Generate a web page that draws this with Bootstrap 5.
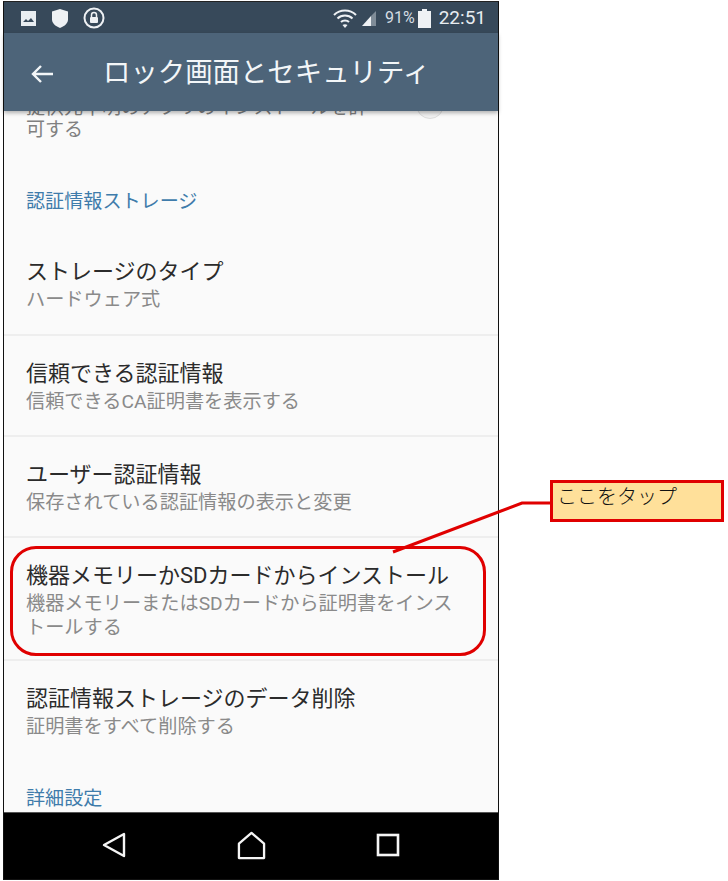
<!DOCTYPE html>
<html lang="ja">
<head>
    <meta charset="UTF-8">
    <meta name="viewport" content="width=device-width, initial-scale=1.0">
    <title>ロック画面とセキュリティ</title>
    <link href="https://cdn.jsdelivr.net/npm/bootstrap@5.3.0/dist/css/bootstrap.min.css" rel="stylesheet">
    <style>
        html, body { height: 881px; overflow: hidden; background: #fff; }
        body { font-family: "Roboto", "Noto Sans CJK JP", sans-serif; position: relative; }
        .shot { padding: 1px 0 0 3px; }
        .phone { width: 496px; height: 879px; border: 1px solid #111; border-top-color: #222; background: #fafafa; position: relative; }
        .status-bar { height: 31px; background: #37495a; color: #e8edf1; padding: 1px 12px 0 16px; font-size: 19px; }
        .status-bar .pct { font-size: 16px; margin: 0 3px 0 8px; color: #d5dde3; }
        .status-left { gap: 14px; }
        .app-bar { height: 78px; background: #4d6479; color: #f3f6f8; padding: 4px 0 0 25px; box-shadow: 0 2px 4px rgba(0,0,0,.3); position: relative; z-index: 2; }
        .app-bar h1 { font-size: 27.4px; font-weight: 400; margin: 0 0 0 44px; line-height: 1; white-space: nowrap; }
        .scroll-area { height: 701px; overflow: hidden; }
        .intro { margin-top: -14px; padding: 0 22px; font-size: 19px; line-height: 22px; color: #808080; height: 60px; position: relative; }
        .intro-toggle { position: absolute; left: 412px; top: -6px; width: 28px; height: 28px; border-radius: 50%; background: #f1f1f1; border: 1px solid #ddd; }
        .sect-title { padding: 0 22px; color: #3f7cab; font-size: 19.1px; line-height: 26px; }
        .sect-first { margin-top: 32px; }
        .sect-last { margin-top: 21px; }
        .set-row { padding: 24px 22px 21px; border-bottom: 2px solid #eeeeee; }
        .row-top { padding-top: 43px; padding-bottom: 22px; }
        .row-wrap { padding-bottom: 19px; padding-right: 36px; }
        .row-end { padding-top: 24px; padding-bottom: 26px; }
        .set-name { color: #2b2b2b; font-size: 22px; line-height: 28px; }
        .set-desc { color: #8a8a8a; font-size: 19.2px; line-height: 24px; margin-top: 2px; }
        .nav-strip { height: 67px; background: #000; border-top: 1px solid #555; padding: 0 98px 2px 97px; }
        .nav-home { margin-left: 110px; }
        .tap-ring { position: absolute; left: 10px; top: 546px; width: 476px; height: 110px; border: 3px solid #e00000; border-radius: 26px; z-index: 3; }
        .tap-note { position: absolute; left: 550px; top: 480px; width: 174px; height: 42px; background: #ffe09a; border: 3px solid #e00000; color: #111; font-size: 20px; line-height: 24px; padding: 1px 4px; font-family: "Noto Sans CJK JP", sans-serif; font-weight: 300; }
        .tap-line { position: absolute; left: 380px; top: 495px; z-index: 4; }
    </style>
</head>
<body>
    <div class="shot">
        <div class="phone d-flex flex-column">
            <div class="status-bar d-flex align-items-center">
                <div class="status-left d-flex align-items-center">
                    <svg width="17" height="17" viewBox="0 0 17 17"><path fill="#e8edf1" d="M1 1h15v15H1z"/><path fill="#37495a" d="M3 12l3-3 2 2 3-3 3 4z"/></svg>
                    <svg width="18" height="21" viewBox="0 0 18 21"><path fill="#eef1f4" d="M9 1l8 2.500v8c0 4-4 7-8 8.500-4-1.500-8-4.500-8-8.500v-8z"/></svg>
                    <svg width="22" height="22" viewBox="0 0 22 22"><circle cx="11" cy="11" r="9.500" fill="none" stroke="#eef1f4" stroke-width="2"/><rect x="7" y="10" width="8" height="6" rx="1" fill="#eef1f4"/><path d="M8.500 10V8a2.500 2.500 0 0 1 5 0v2" fill="none" stroke="#eef1f4" stroke-width="1.500"/></svg>
                </div>
                <div class="ms-auto d-flex align-items-center">
                    <svg width="24" height="19" viewBox="0 0 24 19"><g fill="none" stroke="#eef1f4" stroke-width="2"><path d="M1 6c6-6 16-6 22 0"/><path d="M4.500 9.500c4-4 11-4 15 0"/><path d="M8 13c2-2 6-2 8 0"/></g><path fill="#eef1f4" d="M12 19l-2.500-3c1.500-1 3.500-1 5 0z"/></svg>
                    <svg width="16" height="16" viewBox="0 0 16 16" class="ms-1"><path fill="#eef1f4" d="M1 16L10 6v10z"/><path fill="#7f8c98" d="M10 6l5-5v15h-5z"/></svg>
                    <span class="pct">91%</span>
                    <svg width="13" height="19" viewBox="0 0 13 19"><path fill="#eef1f4" d="M4 0h5v2h4v17H0V2h4z"/></svg>
                    <span class="ms-2">22:51</span>
                </div>
            </div>
            <div class="app-bar d-flex align-items-center">
                <svg width="30" height="24" viewBox="0 0 30 24" class="flex-shrink-0"><path d="M24 12H4M12 4l-8 8 8 8" fill="none" stroke="#f3f6f8" stroke-width="2.400"/></svg>
                <h1>ロック画面とセキュリティ</h1>
            </div>
            <div class="scroll-area">
                <div class="intro">
                    <div>提供元不明のアプリのインストールを許</div>
                    <div>可する</div>
                    <span class="intro-toggle"></span>
                </div>
                <div class="sect-title sect-first">認証情報ストレージ</div>
                <div class="set-row row-top">
                    <div class="set-name">ストレージのタイプ</div>
                    <div class="set-desc">ハードウェア式</div>
                </div>
                <div class="set-row">
                    <div class="set-name">信頼できる認証情報</div>
                    <div class="set-desc">信頼できるCA証明書を表示する</div>
                </div>
                <div class="set-row">
                    <div class="set-name">ユーザー認証情報</div>
                    <div class="set-desc">保存されている認証情報の表示と変更</div>
                </div>
                <div class="set-row row-wrap">
                    <div class="set-name">機器メモリーかSDカードからインストール</div>
                    <div class="set-desc">機器メモリーまたはSDカードから証明書をインストールする</div>
                </div>
                <div class="set-row row-end border-0">
                    <div class="set-name">認証情報ストレージのデータ削除</div>
                    <div class="set-desc">証明書をすべて削除する</div>
                </div>
                <div class="sect-title sect-last">詳細設定</div>
            </div>
            <div class="nav-strip d-flex align-items-center">
                <svg width="26" height="28" viewBox="0 0 26 28"><path d="M3 14L23 3v22z" fill="none" stroke="#f5f5f5" stroke-width="2.400" stroke-linejoin="round"/></svg>
                <svg width="29" height="29" viewBox="0 0 30 30" class="nav-home"><path d="M2 13L15 2l13 11v15H2z" fill="none" stroke="#f5f5f5" stroke-width="2.400" stroke-linejoin="round"/></svg>
                <svg width="24" height="24" viewBox="0 0 24 24" class="ms-auto"><rect x="2" y="2" width="20" height="20" fill="none" stroke="#f5f5f5" stroke-width="2.600"/></svg>
            </div>
        </div>
    </div>
    <!-- annotation drawn over the screenshot -->
    <div class="tap-ring"></div>
    <svg class="tap-line" width="172" height="60" viewBox="0 0 172 60"><path d="M13 57L142 8h28" fill="none" stroke="#e00000" stroke-width="3"/></svg>
    <div class="tap-note">ここをタップ</div>
    <script src="https://cdn.jsdelivr.net/npm/bootstrap@5.3.0/dist/js/bootstrap.bundle.min.js"></script>
</body>
</html>
